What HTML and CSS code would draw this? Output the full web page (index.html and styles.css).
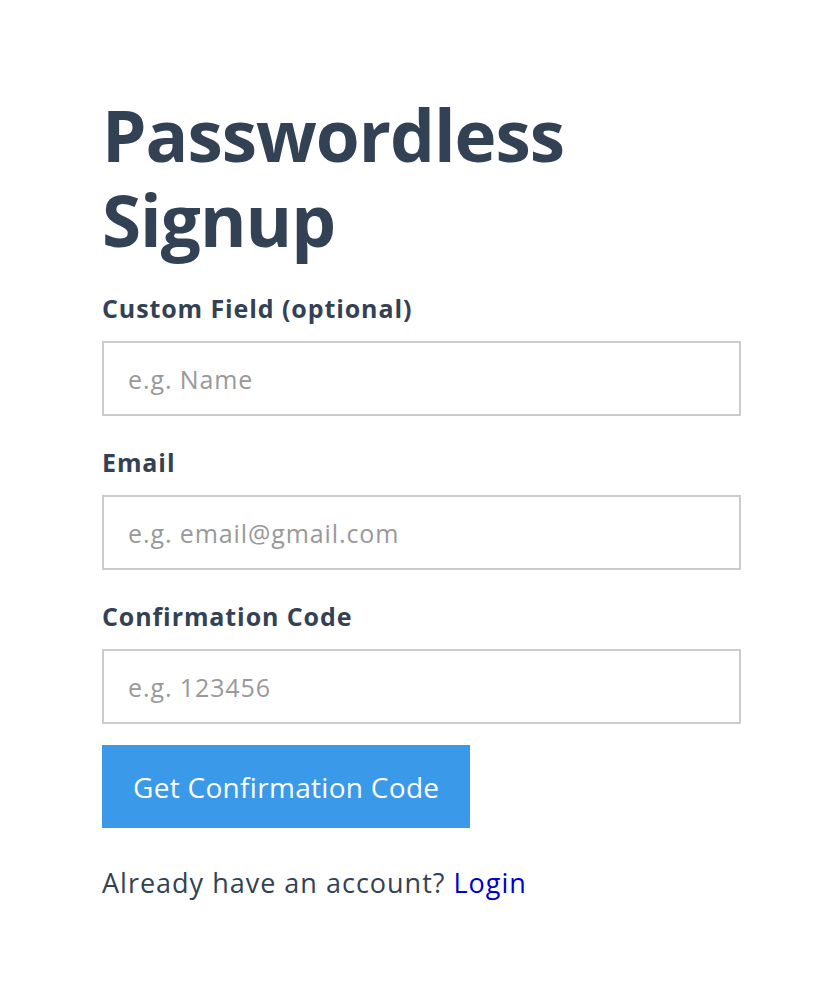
FILE: index.html
```html
<!DOCTYPE html>
<html lang="en">
<head>
  <meta charset="UTF-8" />
  <meta name="viewport" content="width=device-width, initial-scale=1.0" />
  <title>Passwordless Signup</title>
  <link rel="stylesheet" href="styles.css">
</head>
<body>
  <div class="container">
    <h1 class="title">Passwordless Signup</h1>

    <form class="signup-form" onsubmit="return false;">
      <label class="field-label" for="customField">Custom Field (optional)</label>
      <input type="text" id="customField" class="field-input" placeholder="e.g. Name" />

      <label class="field-label" for="email">Email</label>
      <input type="email" id="email" class="field-input" placeholder="e.g. email@gmail.com" />

      <label class="field-label" for="code">Confirmation Code</label>
      <input type="text" id="code" class="field-input" placeholder="e.g. 123456" />

      <button type="submit" class="button">Get Confirmation Code</button>
    </form>

    <p class="login-text">Already have an account? <a href="#" class="login-link">Login</a></p>
  </div>
</body>
</html>
```

FILE: styles.css
```css
body {
  font-family: 'Open Sans', 'Lato', sans-serif;
  background-color: #ffffff;
  color: #334155;
  margin: 0;
}
.container {
  width: 639px;
  padding: 92px 0 0 102px;
}
.title {
  font-size: 71px;
  line-height: 85px;
  font-weight: 700;
  letter-spacing: -1px;
  margin: 0 0 31px;
  color: #334155;
}
.signup-form {
  display: flex;
  flex-direction: column;
  align-items: flex-start;
}
.field-label {
  font-size: 25px;
  font-weight: 700;
  line-height: 30px;
  letter-spacing: 0.9px;
  margin-bottom: 18px;
}
.field-input {
  box-sizing: border-box;
  width: 639px;
  height: 75px;
  padding: 0 24px;
  border: 2px solid #cccccc;
  border-radius: 0;
  font-family: inherit;
  font-size: 25px;
  letter-spacing: 0.9px;
  color: #334155;
  margin-bottom: 31px;
  outline: none;
}
.field-input::placeholder {
  color: #999999;
}
.field-input:last-of-type {
  margin-bottom: 21px;
}
.button {
  height: 83px;
  padding: 0 31px;
  background-color: #3b99ea;
  color: #ffffff;
  border: none;
  border-radius: 0;
  font-family: inherit;
  font-size: 28px;
  letter-spacing: 0.3px;
  cursor: pointer;
}
.login-text {
  font-size: 27px;
  line-height: 34px;
  letter-spacing: 1px;
  margin: 38px 0 0;
  color: #334155;
}
.login-link {
  color: #0000cc;
  text-decoration: none;
}
```
